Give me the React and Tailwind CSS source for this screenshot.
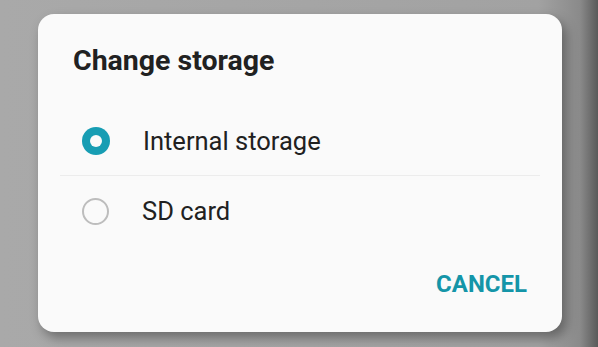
import { useState } from "react";

const opciones = [
  { id: "internal", label: "Internal storage" },
  { id: "sd", label: "SD card" },
];

function Radio({ checked }) {
  return checked ? (
    <span className="flex h-[28px] w-[28px] shrink-0 items-center justify-center rounded-full bg-[#179db3]">
      <span className="h-[12px] w-[12px] rounded-full bg-[#fafafa]" />
    </span>
  ) : (
    <span className="h-[27px] w-[27px] shrink-0 rounded-full border-2 border-[#bdbdbd]" />
  );
}

export default function App() {
  const [sel, setSel] = useState("internal");

  return (
    <div className="h-[347px] w-[598px] overflow-hidden bg-[linear-gradient(to_right,#a9a9a9_0%,#a2a2a2_90%,#8a8a8a_97%,#5a5a5a_100%)] pl-[38px] pt-[14px] font-['Roboto',sans-serif]">
      <div className="flex h-[318px] w-[524px] flex-col rounded-[16px] bg-[#fafafa] shadow-[4px_6px_12px_rgba(0,0,0,0.35)]">
        <h1 className="pl-[35px] pt-[30px] text-[28.5px] font-bold leading-[34px] text-[#212121]">
          Change storage
        </h1>
        <ul className="mx-[22px] mt-[28px] flex flex-col">
          {opciones.map((o, i) => (
            <li
              key={o.id}
              onClick={() => setSel(o.id)}
              className={
                "flex h-[70px] items-center gap-[33px] pl-[22px] " +
                (i === 0 ? "border-b border-[#ececec]" : "")
              }
            >
              <Radio checked={sel === o.id} />
              <span className="text-[25.5px] leading-[30px] text-[#212121]">{o.label}</span>
            </li>
          ))}
        </ul>
        <div className="mt-auto flex justify-end pb-[34px] pr-[35px]">
          <button className="text-[24px] font-bold leading-[28px] text-[#1495a8]">CANCEL</button>
        </div>
      </div>
    </div>
  );
}
